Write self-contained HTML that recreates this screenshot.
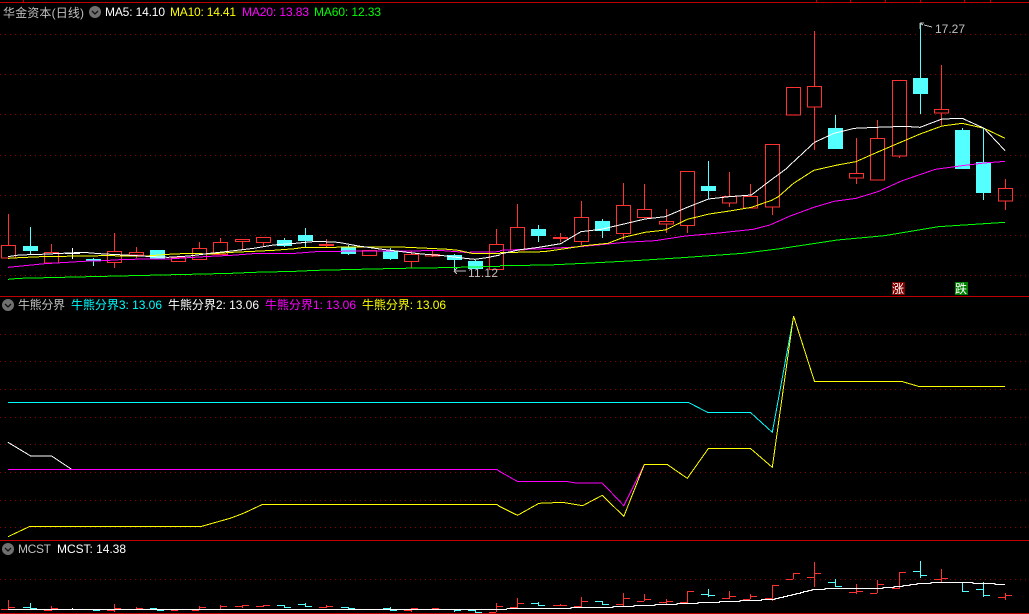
<!DOCTYPE html>
<html lang="zh"><head><meta charset="utf-8"><title>华金资本</title>
<style>
html,body{margin:0;padding:0;background:#000;width:1029px;height:614px;overflow:hidden}
svg{display:block}
text{font-family:"Liberation Sans","Noto Sans CJK SC",sans-serif;font-size:12px}
.l{fill:none;stroke-width:1;vector-effect:non-scaling-stroke;shape-rendering:crispEdges}
.g{stroke:#900000;stroke-width:1;stroke-dasharray:1 4;fill:none;shape-rendering:crispEdges}
.r{fill:none;stroke:#ff3232;stroke-width:1;shape-rendering:crispEdges}
.c{fill:#54ffff;stroke:none;shape-rendering:crispEdges}
.w{fill:none;stroke:#54ffff;stroke-width:1;shape-rendering:crispEdges}
</style></head><body>
<svg width="1029" height="614" viewBox="0 0 1029 614" xmlns="http://www.w3.org/2000/svg">
<rect width="1029" height="614" fill="#000"/>
<!-- grid -->
<path class="g" d="M0 34.5H1029M0 74.5H1029M0 114.5H1029M0 155.5H1029M0 195.5H1029M0 235.5H1029M0 275.5H1029M0 334.5H1029M0 361.5H1029M0 389.5H1029M0 417.5H1029M0 444.5H1029M0 472.5H1029M0 500.5H1029M0 527.5H1029M0 579.5H1029"/>
<!-- frame -->
<path d="M0 2.5H1029M0 296.5H1029M0 540.5H1029M0 613.5H1029" stroke="#c00000" stroke-width="1" fill="none" shape-rendering="crispEdges"/>
<path d="M23.5 0V2M816.5 0V2M850.5 0V2M885.5 0V2M920.5 0V2M964.5 0V2M990.5 0V2" stroke="#c00000" fill="none" shape-rendering="crispEdges"/>
<!-- cyan candle bodies -->
<path class="c" d="M23 246h15v5H23zM86 259h15v2H86zM150 250h15v9h-15zM277 240h15v6h-15zM298 235h15v6h-15zM341 247h15v7h-15zM383 251h15v8h-15zM447 255h15v5h-15zM468 261h15v8h-15zM531 229h15v7h-15zM595 221h15v10h-15zM701 186h15v5h-15zM828 128h15v21h-15zM913 78h15v16h-15zM955 130h15v39h-15zM976 162h15v31h-15z"/>
<!-- cyan wicks -->
<path class="w" d="M30.5 227V254M93.5 258V266M284.5 238V247M305.5 228V247M348.5 245V255M390.5 248V260M454.5 254V270M475.5 260V269M538.5 225V242M602.5 219V238M708.5 161V199M835.5 115V128M920.5 23V114M962.5 128V130M983.5 128V200"/>
<!-- white doji -->
<path d="M72.5 248V259M65 253.5H80" stroke="#fff" fill="none" shape-rendering="crispEdges"/>
<!-- red candles -->
<path class="r" d="M1.5 245.5h14v12.5h-14zM8.5 214V245M44.5 252.5h14v10.5h-14zM51.5 244V252M107.5 251.5h14v11h-14zM114.5 233V251M114.5 263V268M129.5 252.5h14v2.5h-14zM136.5 247V252M136.5 255V258M171.5 257.5h14v4h-14zM192.5 248.5h14v11h-14zM199.5 242V248M213.5 242.5h14v12h-14zM220.5 238V242M235.5 239.5h14v2h-14zM242.5 242V249M256.5 237.5h14v5h-14zM263.5 243V246M326.5 239V248M362.5 250.5h14v5h-14zM404.5 254.5h14v7h-14zM411.5 251V254M411.5 262V268M425.5 254.5h14v1.5h-14zM432.5 251V257M489.5 244.5h14v25h-14zM496.5 229V244M510.5 227.5h14v22.5h-14zM517.5 204V227M560.5 233V242M574.5 217.5h14v24h-14zM581.5 201V217M581.5 242V245M616.5 205.5h14v28h-14zM623.5 183V205M623.5 234V240M637.5 209.5h14v8h-14zM644.5 184V209M659.5 221.5h14v2.5h-14zM666.5 209V221M666.5 224V233M680.5 171.5h14v54h-14zM687.5 226V233M722.5 196.5h14v6.5h-14zM729.5 172V196M729.5 203V207M743.5 196.5h14v11.5h-14zM750.5 184V196M765.5 144.5h14v62.5h-14zM772.5 207V215M786.5 87.5h14v27.5h-14zM807.5 86.5h14v20.5h-14zM814.5 31V86M814.5 107V150M849.5 173.5h14v4.5h-14zM856.5 138V173M856.5 178V184M870.5 138.5h14v41.5h-14zM877.5 120V138M892.5 80.5h14v75.5h-14zM899.5 156V158M934.5 109.5h14v3.5h-14zM941.5 65V109M941.5 113V125M998.5 188.5h14v12.5h-14zM1005.5 179V188M1005.5 201V210"/>
<rect x="319" y="244" width="15" height="2" fill="#ff3232" shape-rendering="crispEdges"/>
<rect x="553" y="237" width="15" height="2" fill="#ff3232" shape-rendering="crispEdges"/>
<!-- MA lines, left half in 3x coordinates -->
<g transform="scale(.33333)">
<polyline class="l" stroke="#00ff00" points="24,838 57,835 185,832 312,829 440,826 567,823 693,820 760,817 885,814 948,811 1075,808 1203,805 1330,803 1500,799"/>
<polyline class="l" stroke="#ff00ff" points="24,802 75,797 135,791 185,788 250,784 312,782 375,778 505,777 565,773 630,769 695,766 760,761 885,760 948,755 1075,753 1330,752 1395,757 1460,756 1500,755"/>
<polyline class="l" stroke="#ffff00" points="24,775 57,773 123,770 312,767 440,768 504,763 567,760 630,762 695,757 760,754 820,751 885,746 905,743 1075,741 1200,741 1265,744 1345,748 1375,751 1415,760 1500,760"/>
<polyline class="l" stroke="#ffffff" points="24,770 57,765 123,763 186,760 249,757 312,762 375,765 440,769 504,772 567,768 630,760 695,753 760,745 820,735 885,730 950,724 1015,727 1075,738 1140,747 1205,755 1265,762 1330,767 1395,775 1425,778 1460,773 1500,765"/>
</g>
<!-- MA lines, right half -->
<g transform="translate(500,0) scale(.3374,.33333)">
<polyline class="l" stroke="#00ff00" points="0,797 145,795 270,789 400,782 540,773 720,760 830,746 1000,720 1140,707 1300,680 1497,667"/>
<polyline class="l" stroke="#ff00ff" points="0,751 130,746 225,741 320,732 370,727 460,722 550,708 640,700 750,688 800,675 860,648 930,622 990,604 1055,595 1120,575 1190,543 1290,508 1370,497 1435,489 1497,484"/>
<polyline class="l" stroke="#ffff00" points="0,758 130,755 200,745 250,737 320,730 366,712 430,697 490,690 555,658 620,642 680,633 745,622 805,601 825,590 870,550 930,511 1000,495 1055,485 1115,458 1180,430 1245,402 1310,378 1370,370 1435,385 1497,415"/>
<polyline class="l" stroke="#ffffff" points="0,762 60,749 115,742 180,731 240,695 300,688 367,672 430,657 490,650 555,622 618,597 680,590 745,585 790,550 850,505 865,490 932,427 990,400 1050,385 1115,382 1200,379 1245,382 1310,357 1370,355 1435,385 1497,452"/>
</g>
<!-- extreme labels -->
<path d="M920 23H924M920 23L923 25M924 25L932 27M920 23V29" stroke="#c0c0c0" fill="none" shape-rendering="crispEdges"/>
<text x="935" y="33" fill="#c0c0c0" textLength="30" lengthAdjust="spacing">17.27</text>
<path d="M454 271H466M454 271L457 268M454 271L457 274" stroke="#c0c0c0" fill="none" shape-rendering="crispEdges"/>
<text x="468" y="277" fill="#c0c0c0" textLength="30" lengthAdjust="spacing">11.12</text>
<!-- badges -->
<rect x="892" y="282" width="13" height="13" fill="#800000"/>
<text x="892" y="293" fill="#fff">涨</text>
<rect x="955" y="282" width="13" height="13" fill="#008000"/>
<text x="955" y="293" fill="#fff">跌</text>
<!-- top legend -->
<text x="3" y="17" fill="#c0c0c0" textLength="81" lengthAdjust="spacing">华金资本(日线)</text>
<circle cx="95" cy="12" r="6" fill="#707070"/><path d="M92 11L95 14L98 11" stroke="#111" stroke-width="1.3" fill="none"/>
<text x="105" y="16" fill="#fff" textLength="60" lengthAdjust="spacing">MA5: 14.10</text>
<text x="170" y="16" fill="#ffff00" textLength="66" lengthAdjust="spacing">MA10: 14.41</text>
<text x="242" y="16" fill="#ff00ff" textLength="67" lengthAdjust="spacing">MA20: 13.83</text>
<text x="314" y="16" fill="#00ff00" textLength="67" lengthAdjust="spacing">MA60: 12.33</text>
<!-- mid legend -->
<circle cx="8" cy="305" r="6" fill="#707070"/><path d="M5 304L8 307L11 304" stroke="#111" stroke-width="1.3" fill="none"/>
<text x="18" y="309" fill="#c0c0c0" textLength="47" lengthAdjust="spacing">牛熊分界</text>
<text x="71" y="309" fill="#00ffff" textLength="91" lengthAdjust="spacing">牛熊分界3: 13.06</text>
<text x="168" y="309" fill="#fff" textLength="91" lengthAdjust="spacing">牛熊分界2: 13.06</text>
<text x="265" y="309" fill="#ff00ff" textLength="91" lengthAdjust="spacing">牛熊分界1: 13.06</text>
<text x="362" y="309" fill="#ffff00" textLength="84" lengthAdjust="spacing">牛熊分界: 13.06</text>
<!-- mid lines -->
<g transform="translate(0,290) scale(.33333)">
<polyline class="l" stroke="#ffffff" points="24,457 92,498 155,498 215,538"/>
<polyline class="l" stroke="#00ffff" points="24,337 1500,337"/>
<polyline class="l" stroke="#ff00ff" points="24,538 1490,538 1500,545"/>
<polyline class="l" stroke="#ffff00" points="24,740 90,709 605,709 690,685 730,670 788,643 1490,643 1500,650"/>
</g>
<g transform="translate(500,290) scale(.3374,.33333)">
<polyline class="l" stroke="#00ffff" points="0,337 558,337 615,367 742,367 807,427 870,80"/>
<polyline class="l" stroke="#ff00ff" points="0,545 51,574 195,574 225,579 303,579 367,647 428,523"/>
<polyline class="l" stroke="#ffff00" points="0,650 52,676 115,640 185,637 245,647 303,616 367,679 428,523 495,523 555,565 618,475 742,475 807,532 870,78 932,274 1190,274 1240,289 1497,289"/>
</g>
<!-- MCST legend -->
<circle cx="8" cy="549" r="6" fill="#707070"/><path d="M5 548L8 551L11 548" stroke="#111" stroke-width="1.3" fill="none"/>
<text x="18" y="553" fill="#c0c0c0" textLength="33" lengthAdjust="spacing">MCST</text>
<text x="57" y="553" fill="#fff" textLength="69" lengthAdjust="spacing">MCST: 14.38</text>
<!-- MCST OHLC red -->
<path class="r" d="M8.5 600V610M1 609.5H8M8 607.5H15M51.5 606V611M44 610.5H51M51 608.5H58M114.5 604V612M107 610.5H114M114 608.5H121M136.5 607V610M129 609.5H136M136 608.5H143M171 610.5H178M178 609.5H185M199.5 606V610M192 610.5H199M199 607.5H206M220.5 605V609M213 609.5H220M220 606.5H227M242.5 605V608M235 606.5H242M242 605.5H249M263.5 605V607M256 606.5H263M263 605.5H270M326.5 605V608M319 607.5H326M326 606.5H333M369 609.5H376M362 609.5H369M411.5 608V612M404 610.5H411M411 608.5H418M432.5 608V610M425 609.5H432M432 608.5H439M496.5 603V612M489 612.5H496M496 606.5H503
M517.5 598V608M510 607.5h7M517 603.5h7
M560.5 604V606M553 605.5h7M560 605.5h7
M581.5 597V607M574 606.5h7M581 601.5h7
M623.5 593V606M616 604.5h7M623 598.5h7
M644.5 594V601M637 601.5h7M644 599.5h7
M666.5 599V604M659 602.5h7M666 601.5h7
M687.5 591V604M680 602.5h7M687 591.5h7
M729.5 591V599M722 598.5h7M729 596.5h7
M750.5 594V599M743 599.5h7M750 596.5h7
M772.5 585V601M765 598.5h7M772 585.5h7
M793.5 573V579M786 579.5h7M793 573.5h7
M814.5 562V587M807 577.5h7M814 573.5h7
M856.5 584V594M849 592.5h7M856 591.5h7
M877.5 580V593M870 593.5h7M877 584.5h7
M899.5 572V589M892 588.5h7M899 572.5h7
M941.5 569V582M934 579.5h7M941 578.5h7
M1005.5 593V600M998 597.5h7M1005 595.5h7"/>
<!-- MCST OHLC cyan -->
<path class="w" d="M30.5 603V609M23 607.5H30M30 608.5H37M93.5 609V611M86 609.5H93M93 610.5H100M150 608.5H157M157 610.5H164M284.5 605V607M277 605.5H284M284 607.5H291M305.5 603V607M298 604.5H305M305 606.5H312M348.5 607V609M341 607.5H348M348 608.5H355M390.5 607V610M383 608.5H390M390 610.5H397M454.5 609V612M447 609.5H454M454 610.5H461M475.5 610V612M468 610.5H475M475 612.5H482
M538.5 602V606M531 603.5h7M538 605.5h7
M602.5 601V605M595 601.5h7M602 604.5h7
M708.5 589V597M701 594.5h7M708 595.5h7
M835.5 579V587M828 582.5h7M835 586.5h7
M920.5 561V578M913 571.5h7M920 575.5h7
M962.5 582V591M955 582.5h7M962 591.5h7
M983.5 582V597M976 589.5h7M983 595.5h7"/>
<path d="M72.5 608V610" stroke="#fff" fill="none" shape-rendering="crispEdges"/>
<!-- MCST white line -->
<path d="M8 609.5H507" stroke="#fff" fill="none" shape-rendering="crispEdges"/>
<g transform="translate(500,540) scale(.3374,.33333)">
<polyline class="l" stroke="#ffffff" points="20,205 210,205 210,202 335,202 335,199 397,199 397,196 460,196 460,193 525,193 525,190 587,190 587,187 650,187 650,184 712,184 712,181 775,181 775,178 815,178 815,175 827,175 827,172 840,172 840,169 852,169 852,166 865,166 865,163 878,163 878,160 890,160 890,157 900,157 900,154 913,154 913,151 925,151 925,148 963,148 963,145 1135,145 1135,142 1168,142 1168,139 1195,139 1195,136 1215,136 1215,133 1236,133 1236,130 1278,130 1278,127 1402,127 1402,130 1467,130 1467,133 1497,133"/>
</g>
</svg>
</body></html>
